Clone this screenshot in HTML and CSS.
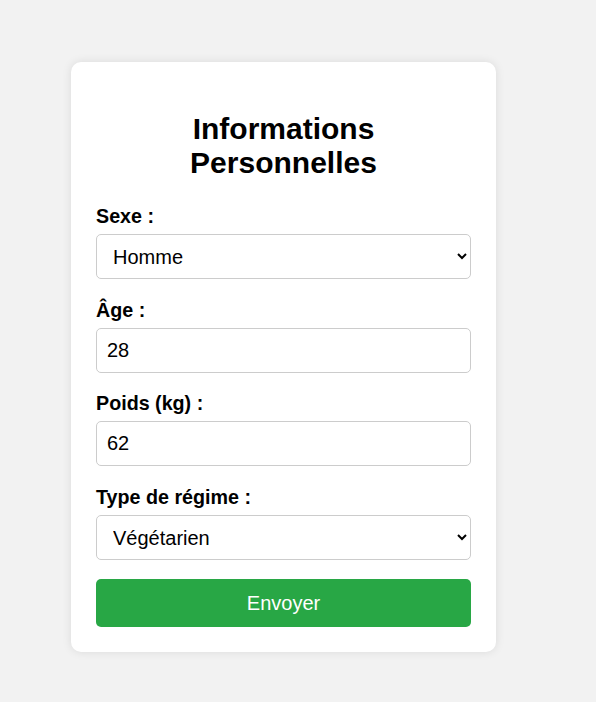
FILE: index.html
```html
<!DOCTYPE html>
<html lang="fr">
<head>
<meta charset="utf-8">
<title>Informations Personnelles</title>
<link rel="stylesheet" href="styles.css">
</head>
<body>
<div class="page">
  <form class="card">
    <h2 class="title">Informations Personnelles</h2>
    <label class="label" for="sexe">Sexe :</label>
    <select class="field" id="sexe">
      <option>Homme</option>
      <option>Femme</option>
    </select>
    <label class="label" for="age">Âge :</label>
    <input class="field" id="age" type="text" value="28">
    <label class="label" for="poids">Poids (kg) :</label>
    <input class="field" id="poids" type="text" value="62">
    <label class="label" for="regime">Type de régime :</label>
    <select class="field" id="regime">
      <option>Végétarien</option>
      <option>Omnivore</option>
    </select>
    <button class="submit" type="button">Envoyer</button>
  </form>
</div>
</body>
</html>
```

FILE: styles.css
```css
html, body {
  margin: 0;
  padding: 0;
  background: #f2f2f2;
  font-family: "Liberation Sans", Arial, sans-serif;
}

.page {
  padding: 62px 0 50px 71px;
}

.card {
  box-sizing: border-box;
  width: 425px;
  padding: 25px;
  background: #ffffff;
  border-radius: 10px;
  box-shadow: 0 0 10px rgba(0, 0, 0, 0.1);
  display: flex;
  flex-direction: column;
}

.title {
  margin: 25px 0 25px;
  font-size: 30px;
  font-weight: bold;
  text-align: center;
  color: #000;
}

.label {
  display: block;
  font-size: 19.7px;
  line-height: 22px;
  font-weight: bold;
  color: #000;
  margin-bottom: 7px;
}

.field {
  box-sizing: border-box;
  width: 100%;
  height: 45px;
  padding: 10px;
  margin: 0 0 19.5px 0;
  font-family: "Liberation Sans", Arial, sans-serif;
  font-size: 20px;
  color: #000;
  background: #fff;
  border: 1px solid #ccc;
  border-radius: 5px;
}

select.field {
  padding: 10px 10px 10px 12px;
}

.submit {
  width: 100%;
  height: 48px;
  padding: 0;
  border: none;
  border-radius: 5px;
  background: #28a745;
  color: #fff;
  font-family: "Liberation Sans", Arial, sans-serif;
  font-size: 20px;
  cursor: pointer;
}
```
